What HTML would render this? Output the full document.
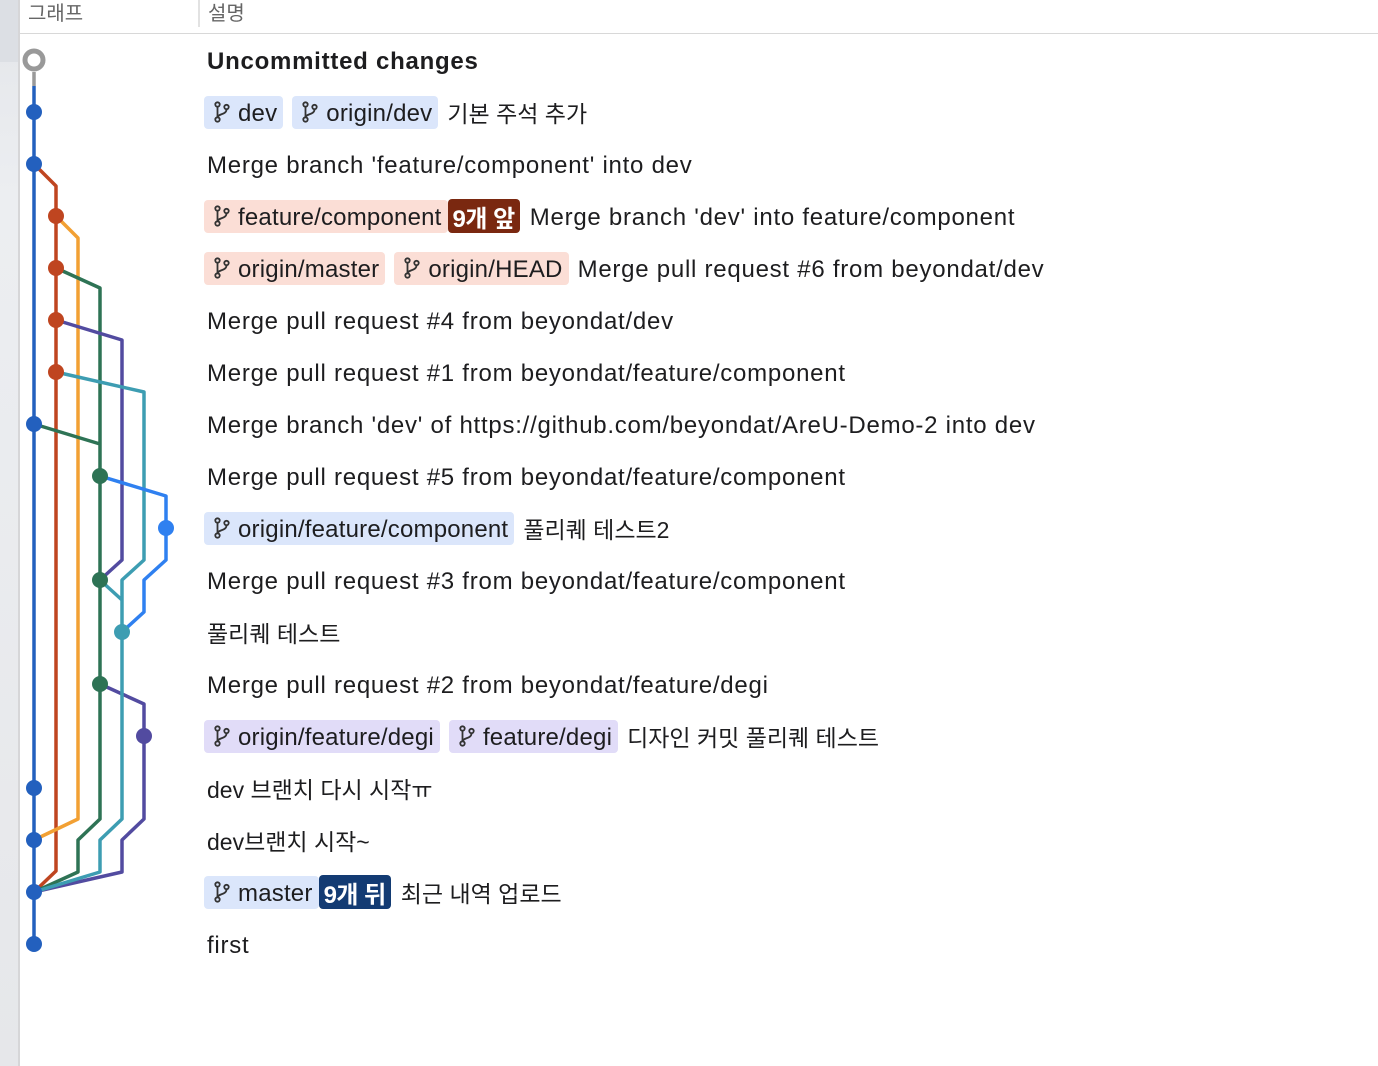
<!DOCTYPE html>
<html><head><meta charset="utf-8"><style>
body{margin:0;width:1378px;height:1066px;overflow:hidden;background:#fff;font-family:"Liberation Sans","Noto Sans CJK KR",sans-serif;color:#1d1d1f;position:relative}
.strip{position:absolute;left:0;top:0;width:18px;height:1066px;background:linear-gradient(#e4e6ea,#eceef1 200px,#e6e7ea);border-right:2px solid #d6d6d8}
.strip2{position:absolute;left:0;top:0;width:18px;height:62px;background:#dcdfe4}
.hdr{position:absolute;left:20px;top:0;right:0;height:33px;border-bottom:1px solid #d8d8d8;font-size:20px;color:#666}
.hdr span{position:absolute;top:-3px}
.sep{position:absolute;left:178px;top:0;width:2px;height:27px;background:#e2e2e2}
.row{position:absolute;left:204px;height:34px;display:flex;align-items:center;font-size:24px;letter-spacing:0.75px;white-space:nowrap}
.row>*{position:relative;top:2px}
.row>.b,.row>.c{top:0}
.k{font-size:23px;letter-spacing:0;top:0!important}
.t{margin-left:3px}
.b{display:inline-flex;align-items:center;height:33px;padding:0 6px 0 10px;border-radius:4px;margin-right:9px;letter-spacing:0.2px}
.b i{font-style:normal;position:relative;top:2px}
.b svg{margin-right:8px}
.bl{background:#dbe6fb}.pk{background:#fbded6}.pu{background:#e1dcf8}
.c{color:#fff;border-radius:4px;padding:0 5px;height:34px;display:inline-flex;align-items:center;margin-left:-9px;margin-right:10px;font-weight:bold;letter-spacing:-0.5px}
</style></head><body>
<div class="strip"></div><div class="strip2"></div>
<div class="hdr"><span style="left:8px">그래프</span><div class="sep"></div><span style="left:188px">설명</span></div>
<svg width="200" height="1066" style="position:absolute;left:0;top:0" fill="none" stroke-width="3.5" stroke-linejoin="round">
<path d="M34 72V86" stroke="#999"/>
<path d="M34 86V944" stroke="#2360be"/>
<path d="M34 164L56 186V871L34 892" stroke="#bf4520"/>
<path d="M56 216L78 238V819L34 840" stroke="#f2a033"/>
<path d="M56 268L100 288V819L78 840V872L34 892M34 424L100 444" stroke="#2e7355"/>
<path d="M56 320L122 340V560L100 580M100 684L144 704V819L122 840V872L34 892" stroke="#524ba0"/>
<path d="M56 372L144 392V560L122 580V819L100 840V872L34 892M100 580L122 600" stroke="#3d9db2"/>
<path d="M100 476L166 496V560L144 580V612L122 632" stroke="#2f80f0"/>
<circle cx="34" cy="60" r="9" stroke="#999" stroke-width="5" fill="#fff"/>
<g fill="#2360be"><circle cx="34" cy="112" r="8"/><circle cx="34" cy="164" r="8"/><circle cx="34" cy="424" r="8"/><circle cx="34" cy="788" r="8"/><circle cx="34" cy="840" r="8"/><circle cx="34" cy="892" r="8"/><circle cx="34" cy="944" r="8"/></g>
<g fill="#bf4520"><circle cx="56" cy="216" r="8"/><circle cx="56" cy="268" r="8"/><circle cx="56" cy="320" r="8"/><circle cx="56" cy="372" r="8"/></g>
<g fill="#2e7355"><circle cx="100" cy="476" r="8"/><circle cx="100" cy="580" r="8"/><circle cx="100" cy="684" r="8"/></g>
<circle cx="166" cy="528" r="8" fill="#2f80f0"/>
<circle cx="122" cy="632" r="8" fill="#3d9db2"/>
<circle cx="144" cy="736" r="8" fill="#524ba0"/>
</svg>
<svg width="0" height="0" style="position:absolute"><defs><symbol id="br" viewBox="0 0 16 22"><g fill="none" stroke="#333" stroke-width="1.8"><circle cx="3.5" cy="3.5" r="2.2"/><circle cx="3.5" cy="18.5" r="2.2"/><circle cx="12.5" cy="6" r="2.2"/><path d="M3.5 5.7V16.3M12.5 8.2C12.5 14 4 12.5 3.8 16.3"/></g></symbol></defs></svg>
<div class="row" style="top:43px;font-weight:bold"><span class="t">Uncommitted changes</span></div>
<div class="row" style="top:95px"><span class="b bl"><svg width="16" height="22"><use href="#br"/></svg><i>dev</i></span><span class="b bl"><svg width="16" height="22"><use href="#br"/></svg><i>origin/dev</i></span><span class="k">기본 주석 추가</span></div>
<div class="row" style="top:147px"><span class="t">Merge branch 'feature/component' into dev</span></div>
<div class="row" style="top:199px"><span class="b pk"><svg width="16" height="22"><use href="#br"/></svg><i>feature/component</i></span><span class="c" style="background:#7a2810">9개 앞</span><span>Merge branch 'dev' into feature/component</span></div>
<div class="row" style="top:251px"><span class="b pk"><svg width="16" height="22"><use href="#br"/></svg><i>origin/master</i></span><span class="b pk"><svg width="16" height="22"><use href="#br"/></svg><i>origin/HEAD</i></span><span>Merge pull request #6 from beyondat/dev</span></div>
<div class="row" style="top:303px"><span class="t">Merge pull request #4 from beyondat/dev</span></div>
<div class="row" style="top:355px"><span class="t">Merge pull request #1 from beyondat/feature/component</span></div>
<div class="row" style="top:407px"><span class="t">Merge branch 'dev' of https://github.com/beyondat/AreU-Demo-2 into dev</span></div>
<div class="row" style="top:459px"><span class="t">Merge pull request #5 from beyondat/feature/component</span></div>
<div class="row" style="top:511px"><span class="b bl"><svg width="16" height="22"><use href="#br"/></svg><i>origin/feature/component</i></span><span class="k">풀리퀘 테스트2</span></div>
<div class="row" style="top:563px"><span class="t">Merge pull request #3 from beyondat/feature/component</span></div>
<div class="row" style="top:615px"><span class="t k">풀리퀘 테스트</span></div>
<div class="row" style="top:667px"><span class="t">Merge pull request #2 from beyondat/feature/degi</span></div>
<div class="row" style="top:719px"><span class="b pu"><svg width="16" height="22"><use href="#br"/></svg><i>origin/feature/degi</i></span><span class="b pu"><svg width="16" height="22"><use href="#br"/></svg><i>feature/degi</i></span><span class="k">디자인 커밋 풀리퀘 테스트</span></div>
<div class="row" style="top:771px"><span class="t k">dev 브랜치 다시 시작ㅠ</span></div>
<div class="row" style="top:823px"><span class="t k">dev브랜치 시작~</span></div>
<div class="row" style="top:875px"><span class="b bl"><svg width="16" height="22"><use href="#br"/></svg><i>master</i></span><span class="c" style="background:#133b73">9개 뒤</span><span class="k">최근 내역 업로드</span></div>
<div class="row" style="top:927px"><span class="t">first</span></div>
</body></html>
